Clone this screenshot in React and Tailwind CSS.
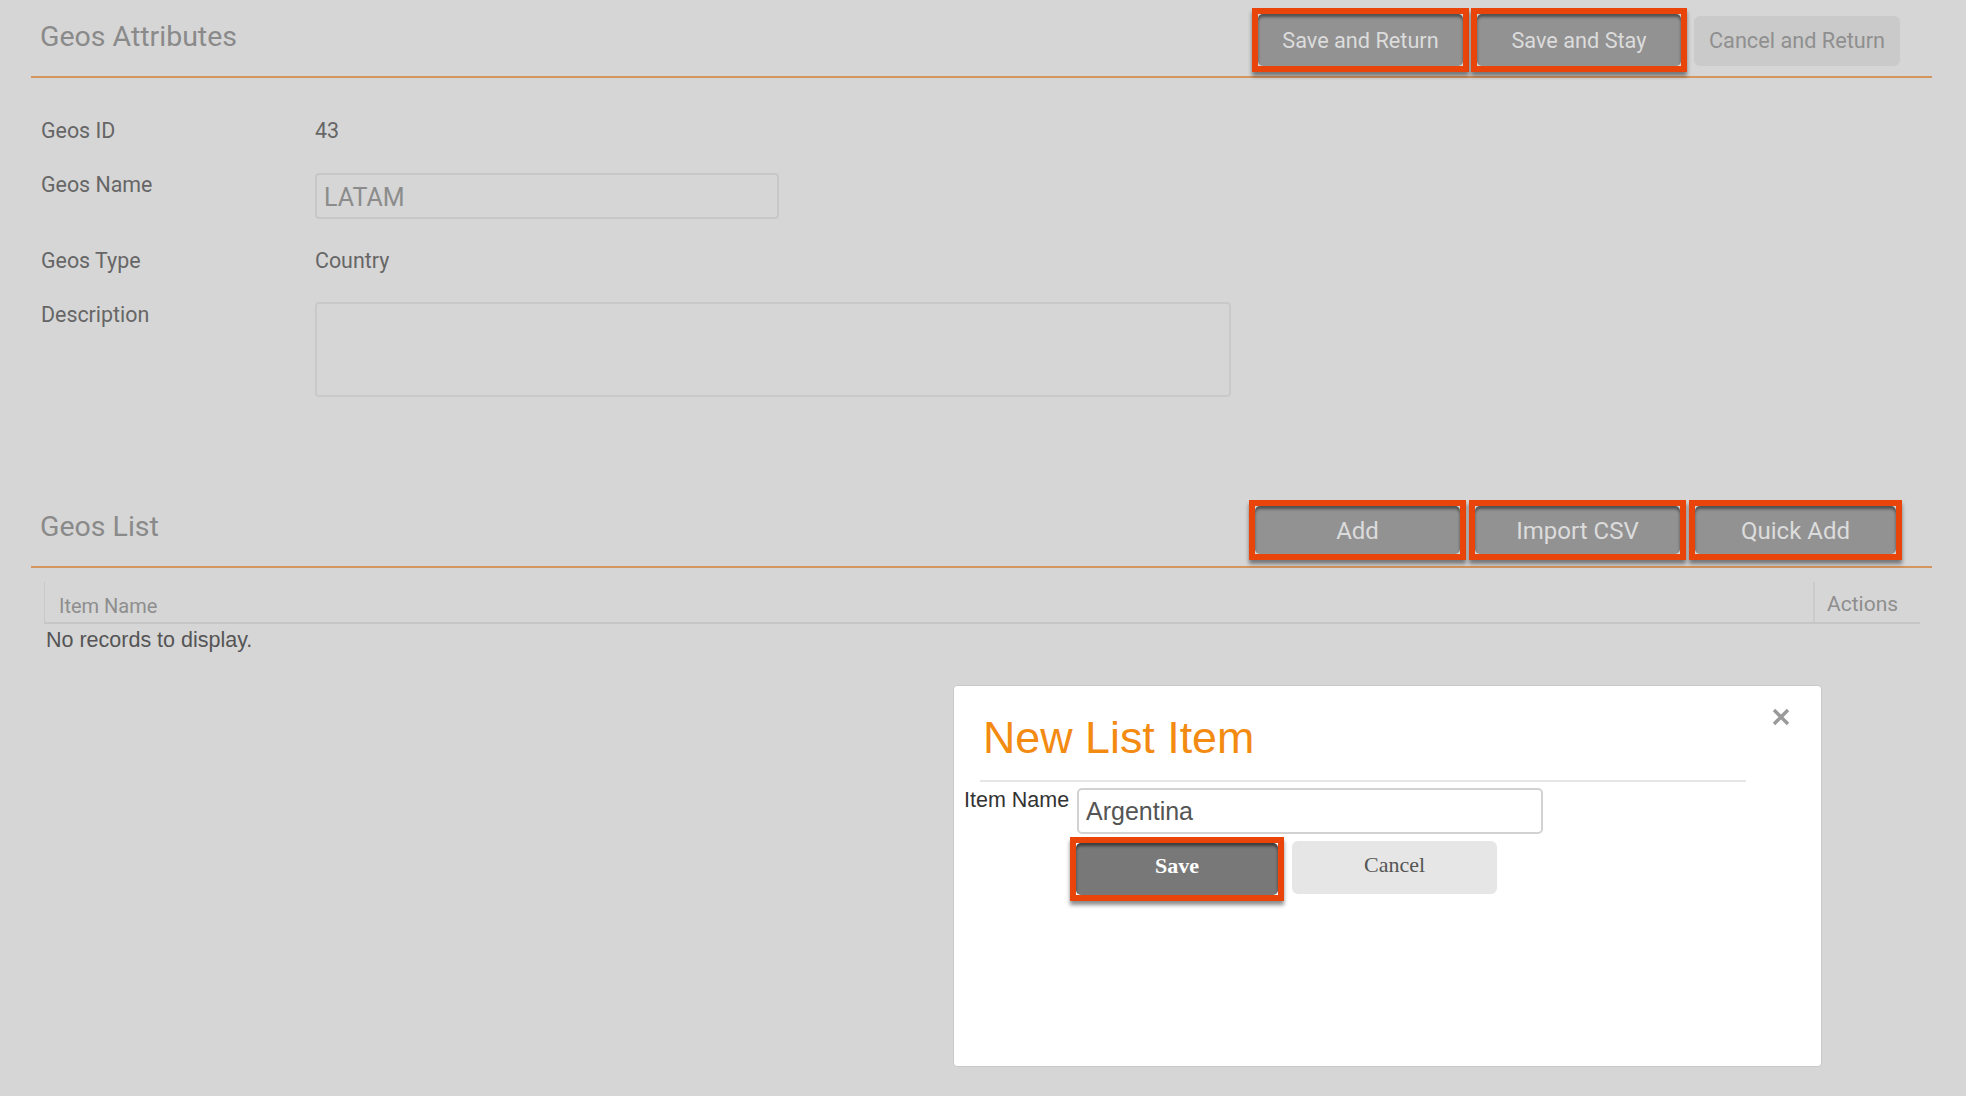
import React from "react";

function HiBtn({ w, h, text, size }) {
  return (
    <div className="border-[6px] border-[#e9450b] shadow-[0_4px_4px_rgba(0,0,0,0.45)]">
      <div
        className={`${w} ${h} ${size} flex items-center justify-center rounded-[5px] bg-[#929292] text-[#dcdcdc] shadow-[inset_0_3px_3px_rgba(0,0,0,0.45)]`}
      >
        {text}
      </div>
    </div>
  );
}

export default function App() {
  return (
    <div
      className="relative w-[1966px] h-[1096px] overflow-hidden bg-[#d6d6d6]"
      style={{ fontFamily: "Roboto, 'Liberation Sans', sans-serif" }}
    >
      <div className="pl-[31px] pr-[34px]">
        {/* Header */}
        <div className="flex justify-between items-start h-[78px] border-b-2 border-[#d4955f]">
          <div className="pt-[20px] pl-[9px] text-[28.5px] leading-[34px] text-[#8a8a8a]">
            Geos Attributes
          </div>
          <div className="flex items-start pt-[8px] pr-[32px]">
            <HiBtn w="w-[205px]" h="h-[52px]" size="text-[21.7px] pt-[2px]" text="Save and Return" />
            <div className="ml-[2px]">
              <HiBtn w="w-[204px]" h="h-[52px]" size="text-[21.7px] pt-[2px]" text="Save and Stay" />
            </div>
            <div className="ml-[7px] mt-[8px] w-[206px] h-[50px] rounded-[6px] bg-[#cacaca] text-[#8f8f8f] text-[21.7px] flex items-center justify-center">
              Cancel and Return
            </div>
          </div>
        </div>

        {/* Form */}
        <div className="flex flex-col gap-[30px] mt-[41px] pl-[10px] text-[21.4px] leading-[24px] text-[#666666]">
          <div className="flex">
            <div className="w-[274px]">Geos ID</div>
            <div>43</div>
          </div>
          <div className="flex items-start">
            <div className="w-[274px]">Geos Name</div>
            <div className="w-[464px] h-[46px] rounded-[4px] border-2 border-[#c7c7c7] flex items-center pl-[7px] pt-[4px] text-[25px] text-[#8c8c8c]">
              LATAM
            </div>
          </div>
          <div className="flex">
            <div className="w-[274px]">Geos Type</div>
            <div>Country</div>
          </div>
          <div className="flex items-start">
            <div className="w-[274px]">Description</div>
            <div className="w-[916px] h-[95px] -mt-[1px] rounded-[4px] border-2 border-[#c9c9c9]"></div>
          </div>
        </div>

        {/* Geos List header */}
        <div className="mt-[103px] flex justify-between items-start h-[68px] border-b-2 border-[#d4955f]">
          <div className="pt-[10px] pl-[9px] text-[28.5px] leading-[34px] text-[#8a8a8a]">
            Geos List
          </div>
          <div className="flex items-start pr-[30px]">
            <HiBtn w="w-[205px]" h="h-[48px]" size="text-[24px] pt-[2px]" text="Add" />
            <div className="ml-[3px]">
              <HiBtn w="w-[205px]" h="h-[48px]" size="text-[24px] pt-[2px]" text="Import CSV" />
            </div>
            <div className="ml-[3px]">
              <HiBtn w="w-[201px]" h="h-[48px]" size="text-[24px] pt-[2px]" text="Quick Add" />
            </div>
          </div>
        </div>

        {/* Table */}
        <div className="ml-[13px] mr-[12px] mt-[14px]">
          <div className="flex h-[42px] border-b-2 border-[#c6c6c6] leading-[24px] text-[#8e8e8e]">
            <div className="flex-1 border-l border-[#c8c8c8] pl-[14px] pt-[12px] text-[20px]">Item Name</div>
            <div className="w-[107px] border-l-2 border-[#cbcbcb] pl-[12px] pt-[10px] text-[21px]">Actions</div>
          </div>
          <div
            className="mt-[4px] pl-[2px] text-[21.5px] leading-[24px] text-[#555555]"
            style={{ fontFamily: "'Liberation Sans', Arial, sans-serif" }}
          >
            No records to display.
          </div>
        </div>
      </div>

      {/* Modal */}
      <div
        className="absolute left-[953px] top-[685px] w-[869px] h-[382px] bg-white rounded-[4px] border border-[#c9c9c9]"
        style={{ fontFamily: "'Liberation Sans', Arial, sans-serif" }}
      >
        <svg
          className="absolute left-[818px] top-[22px]"
          width="18"
          height="18"
          viewBox="0 0 18 18"
        >
          <path d="M2 2 L16 16 M16 2 L2 16" stroke="#9a9a9a" strokeWidth="3.4" strokeLinecap="butt" />
        </svg>
        <div className="pt-[29px] pl-[29px] text-[44.8px] leading-[44px] text-[#f38a12]">
          New List Item
        </div>
        <div className="ml-[26px] mt-[21px] w-[766px] h-[2px] bg-[#e6e6e6]"></div>
        <div className="flex items-start mt-[6px] pl-[10px]">
          <div className="w-[113px] text-[21.5px] leading-[24px] text-[#333333]">Item Name</div>
          <div className="w-[466px] h-[46px] rounded-[5px] border-2 border-[#d2d2d2] flex items-center pl-[7px] pt-[2px] text-[25px] text-[#555555]">
            Argentina
          </div>
        </div>
        <div className="flex items-start mt-[3px] pl-[116px]">
          <div className="border-[6px] border-[#e9450b] shadow-[0_4px_4px_rgba(0,0,0,0.45)]">
            <div
              className="w-[202px] h-[52px] pb-[7px] flex items-center justify-center rounded-[5px] bg-[#787878] text-white text-[22px] font-bold shadow-[inset_0_3px_3px_rgba(0,0,0,0.5)]"
              style={{ fontFamily: "'Liberation Serif', 'Times New Roman', serif" }}
            >
              Save
            </div>
          </div>
          <div
            className="ml-[8px] mt-[4px] w-[205px] h-[53px] pb-[6px] rounded-[6px] bg-[#e6e6e6] text-[#555555] text-[22px] flex items-center justify-center"
            style={{ fontFamily: "'Liberation Serif', 'Times New Roman', serif" }}
          >
            Cancel
          </div>
        </div>
      </div>
    </div>
  );
}
